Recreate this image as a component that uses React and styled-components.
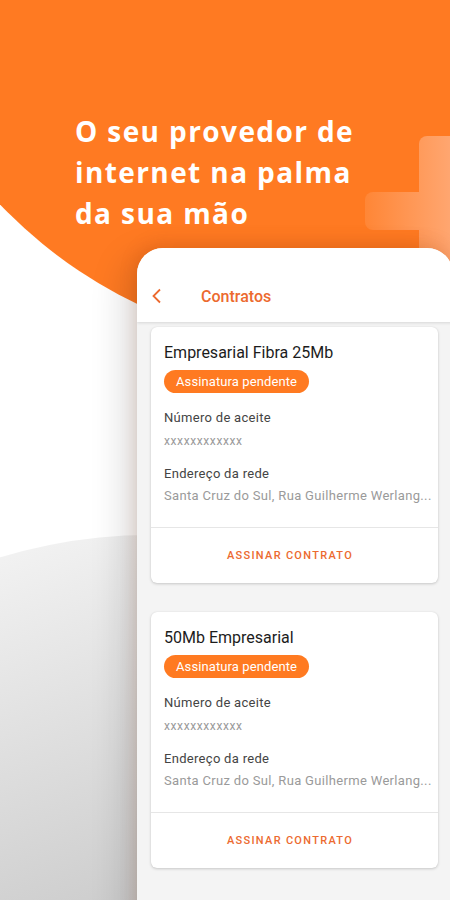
import React from "react";
import styled, { createGlobalStyle } from "styled-components";

const Global = createGlobalStyle`
  html, body { margin: 0; padding: 0; background: #ffffff; }
  body { font-family: Roboto, "Noto Sans", sans-serif; -webkit-font-smoothing: antialiased; }
  * { box-sizing: border-box; }
`;

const Screen = styled.div`
  position: relative;
  width: 450px;
  height: 900px;
  overflow: hidden;
  background: #ffffff;
`;

const Backdrop = styled.svg`
  position: absolute;
  inset: 0;
  width: 450px;
  height: 900px;
  z-index: 0;
`;

const Hero = styled.h1`
  position: relative;
  z-index: 1;
  margin: 0;
  padding: 111px 0 0 75px;
  font-family: "Open Sans", sans-serif;
  font-weight: 700;
  font-size: 28px;
  line-height: 41px;
  letter-spacing: 1.4px;
  color: #ffffff;
`;

const Phone = styled.section`
  position: relative;
  z-index: 1;
  margin: 14px 0 0 137px;
  width: 316px;
  height: 700px;
  border-radius: 26px 26px 0 0;
  background: #f4f4f4;
  overflow: hidden;
  box-shadow: -14px 8px 34px rgba(0, 0, 0, 0.13), 0 -4px 18px rgba(170, 60, 0, 0.18);
`;

const Header = styled.header`
  position: relative;
  z-index: 2;
  display: flex;
  align-items: center;
  height: 74px;
  padding: 22px 0 0 14px;
  background: #ffffff;
  box-shadow: 0 1px 3px rgba(0, 0, 0, 0.12);
`;

const Back = styled.svg`
  width: 12px;
  height: 16px;
  flex: none;
`;

const HeaderTitle = styled.span`
  margin-left: 38px;
  font-family: Roboto, sans-serif;
  font-weight: 500;
  font-size: 16px;
  color: #ec6a2f;
`;

const List = styled.div`
  display: flex;
  flex-direction: column;
  gap: 29px;
  padding: 5px 15px 0 14px;
`;

const Card = styled.article`
  background: #ffffff;
  border-radius: 6px;
  box-shadow: 0 1px 3px rgba(0, 0, 0, 0.18), 0 0 1px rgba(0, 0, 0, 0.1);
  overflow: hidden;
`;

const Body = styled.div`
  display: flex;
  flex-direction: column;
  align-items: flex-start;
  padding: 16px 6px 22px 13px;
  border-bottom: 1px solid #e6e6e6;
`;

const Title = styled.h2`
  margin: 0;
  font-family: Roboto, sans-serif;
  font-weight: 400;
  font-size: 16px;
  line-height: 20px;
  color: #1c1c1c;
`;

const Badge = styled.span`
  margin-top: 7px;
  height: 23px;
  padding: 0 12px;
  display: inline-flex;
  align-items: center;
  border-radius: 12px;
  background: #ff7a21;
  color: #ffffff;
  font-size: 13px;
  letter-spacing: 0.1px;
`;

const Label = styled.div`
  margin-top: 16px;
  font-size: 13px;
  line-height: 18px;
  letter-spacing: 0.3px;
  color: #444444;
`;

const Value = styled.div`
  margin-top: ${(p) => p.$gap}px;
  font-size: ${(p) => p.$size}px;
  line-height: ${(p) => p.$line}px;
  letter-spacing: ${(p) => p.$track}px;
  color: #9a9a9a;
  white-space: nowrap;
`;

const Action = styled.button`
  display: block;
  width: 100%;
  height: 55px;
  border: 0;
  padding: 0 9px 0 0;
  background: transparent;
  font-family: Roboto, sans-serif;
  font-weight: 500;
  font-size: 11px;
  letter-spacing: 1.3px;
  text-transform: uppercase;
  color: #ec6a2f;
`;

const contracts = [
  { name: "Empresarial Fibra 25Mb" },
  { name: "50Mb Empresarial" },
];

export default function App() {
  return (
    <>
      <Global />
      <Screen>
        <Backdrop viewBox="0 0 450 900">
          <defs>
            <linearGradient id="plusG" x1="365" y1="0" x2="450" y2="0" gradientUnits="userSpaceOnUse">
              <stop offset="0" stopColor="#ff8636" />
              <stop offset="1" stopColor="#ffa670" />
            </linearGradient>
            <linearGradient id="greyG" x1="0" y1="540" x2="137" y2="900" gradientUnits="userSpaceOnUse">
              <stop offset="0" stopColor="#f3f3f3" />
              <stop offset="1" stopColor="#cdcdcd" />
            </linearGradient>
          </defs>
          <circle cx="340" cy="-120" r="470" fill="#ff7a22" />
          <rect x="419" y="136" width="40" height="150" rx="8" fill="url(#plusG)" />
          <rect x="365" y="192" width="100" height="38" rx="8" fill="url(#plusG)" />
          <circle cx="150" cy="1050" r="515" fill="url(#greyG)" />
        </Backdrop>
        <Hero>
          O seu provedor de
          <br />
          internet na palma
          <br />
          da sua mão
        </Hero>
        <Phone>
          <Header>
            <Back viewBox="0 0 12 16">
              <path d="M9 1.5 L2.5 8 L9 14.5" fill="none" stroke="#ec6a2f" strokeWidth="1.8" />
            </Back>
            <HeaderTitle>Contratos</HeaderTitle>
          </Header>
          <List>
            {contracts.map((c) => (
              <Card key={c.name}>
                <Body>
                  <Title>{c.name}</Title>
                  <Badge>Assinatura pendente</Badge>
                  <Label>Número de aceite</Label>
                  <Value $gap={6} $size={12} $line={16} $track={0.6}>xxxxxxxxxxxx</Value>
                  <Label>Endereço da rede</Label>
                  <Value $gap={4} $size={13} $line={18} $track={0.33}>
                    Santa Cruz do Sul, Rua Guilherme Werlang...
                  </Value>
                </Body>
                <Action>Assinar contrato</Action>
              </Card>
            ))}
          </List>
        </Phone>
      </Screen>
    </>
  );
}
